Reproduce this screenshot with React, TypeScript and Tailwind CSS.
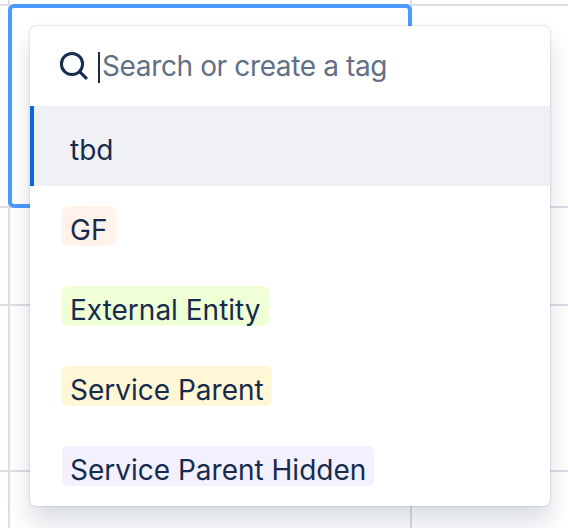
import { useState } from "react";
import clsx from "clsx";

type Tag = { name: string; color: string };

const TAGS: Tag[] = [
  { name: "tbd", color: "bg-transparent" },
  { name: "GF", color: "bg-[#fff3eb]" },
  { name: "External Entity", color: "bg-[#efffd6]" },
  { name: "Service Parent", color: "bg-[#fff7d6]" },
  { name: "Service Parent Hidden", color: "bg-[#f3f0ff]" },
];

const ROWS = ["h-1.5", "h-[202px]", "h-[98px]", "h-[166px]", "h-14"];

function SearchIcon() {
  return (
    <svg
      className="h-8 w-8 shrink-0"
      viewBox="0 0 32 32"
      fill="none"
      stroke="currentColor"
      strokeWidth="3"
    >
      <circle cx="14" cy="14" r="10.6" />
      <path d="M21.6 21.6 28.9 28.9" />
    </svg>
  );
}

function TableGrid() {
  return (
    <div className="flex h-full flex-col">
      {ROWS.map((height, i) => (
        <div
          key={height}
          className={clsx(
            "grid shrink-0 grid-cols-[10px_402px_1fr] border-[#dddee5]",
            height,
            i < ROWS.length - 1 && "border-b-2",
          )}
        >
          <div className="border-r-2 border-[#dddee5]" />
          <div className="relative border-r-2 border-[#dddee5]">
            {i === 1 && (
              <div className="absolute -top-0.5 -right-0.5 -bottom-0.5 -left-0.5 rounded-md border-4 border-[#4c9aff]" />
            )}
          </div>
          <div />
        </div>
      ))}
    </div>
  );
}

function TagOption({
  tag,
  active,
  onHover,
}: {
  tag: Tag;
  active: boolean;
  onHover: () => void;
}) {
  return (
    <li
      onMouseEnter={onHover}
      className={clsx(
        "flex h-20 items-center border-l-4 pl-7",
        active ? "border-[#0c66e4] bg-[#f0f1f4]" : "border-transparent",
      )}
    >
      <span
        className={clsx(
          "h-10 min-w-[54px] rounded-md px-2 pt-1 text-[28px] leading-10 whitespace-nowrap",
          tag.color,
        )}
      >
        {tag.name}
      </span>
    </li>
  );
}

export default function App() {
  const [active, setActive] = useState("tbd");

  return (
    <div className="relative h-[528px] w-[568px] overflow-hidden bg-white font-['Inter',sans-serif] text-[#172b4d]">
      <TableGrid />
      <div className="absolute top-[26px] left-[30px] w-[520px] overflow-hidden rounded-md bg-white shadow-[0_16px_24px_rgba(9,30,66,0.15),0_0_2px_rgba(9,30,66,0.31)]">
        <div className="flex h-20 items-center pl-7">
          <SearchIcon />
          <span className="mt-[3px] ml-2 h-[31px] w-0.5 bg-[#172b4d]" />
          <span className="ml-0.5 text-[28px] leading-10 tracking-[-0.37px] text-[#626f86]">
            Search or create a tag
          </span>
        </div>
        <ul>
          {TAGS.map((tag) => (
            <TagOption
              key={tag.name}
              tag={tag}
              active={tag.name === active}
              onHover={() => setActive(tag.name)}
            />
          ))}
        </ul>
      </div>
    </div>
  );
}
